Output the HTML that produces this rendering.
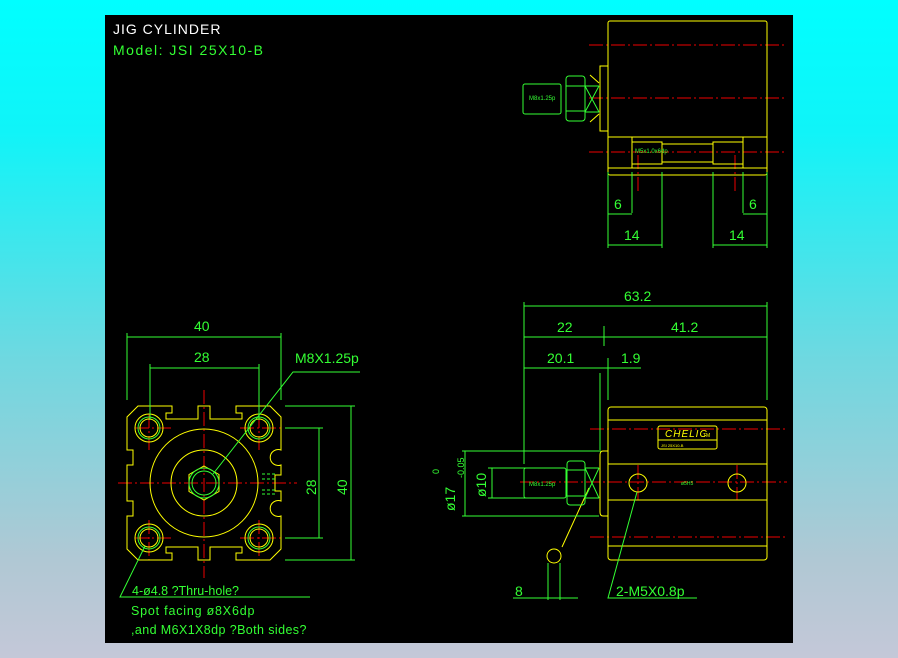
<!DOCTYPE html>
<html><head><meta charset="utf-8"><style>
html,body{margin:0;padding:0;width:898px;height:658px;overflow:hidden;background:linear-gradient(#00ffff 0%,#10f4f8 20%,#70d8e0 55%,#b0c8d4 85%,#c4c8d8 100%);}
svg{position:absolute;left:0;top:0}
text{font-family:"Liberation Sans",sans-serif}
</style></head><body>
<svg width="898" height="658" viewBox="0 0 898 658">
<rect x="105" y="15" width="688" height="628" fill="#000"/>
<g font-size="14" letter-spacing="1">
<text x="113" y="34" fill="#fff">JIG CYLINDER</text>
<text x="113" y="55" fill="#3f3" letter-spacing="1.5">Model:  JSI 25X10-B</text>
</g>
<g stroke="#e00" stroke-width="1" stroke-dasharray="14,3,2,3" fill="none">
<line x1="118" y1="483" x2="297" y2="483"/><line x1="204" y1="390" x2="204" y2="578"/>
<line x1="135" y1="428" x2="173" y2="428"/><line x1="149" y1="414" x2="149" y2="452"/>
<line x1="240" y1="428" x2="282" y2="428"/><line x1="259" y1="414" x2="259" y2="452"/>
<line x1="135" y1="538" x2="173" y2="538"/><line x1="149" y1="520" x2="149" y2="560"/>
<line x1="240" y1="538" x2="282" y2="538"/><line x1="259" y1="520" x2="259" y2="560"/>
<line x1="589" y1="45" x2="787" y2="45"/><line x1="589" y1="98" x2="787" y2="98"/><line x1="589" y1="152" x2="787" y2="152"/>
<line x1="638" y1="155" x2="638" y2="192"/><line x1="735" y1="155" x2="735" y2="192"/>
<line x1="590" y1="429" x2="787" y2="429"/><line x1="520" y1="482" x2="787" y2="482"/><line x1="590" y1="537" x2="787" y2="537"/>
<line x1="638" y1="465" x2="638" y2="500"/><line x1="737" y1="465" x2="737" y2="500"/>
</g>
<g stroke="#ff0" stroke-width="1" fill="none">
<path d="M138,406 H172 V413 H166 V419 H198 V406 H210 V419 H242 V413 H236 V406 H270 L281,417 V450 A8,8 0 1 0 281,465 V475 H275 V491 H281 V501 A8,8 0 1 0 281,516 V549 L270,560 H236 V553 H242 V547 H210 V560 H198 V547 H166 V553 H172 V560 H138 L127,549 V516 H133 V501 H127 V465 H133 V450 H127 V417 Z"/>
<circle cx="204" cy="483" r="54"/><circle cx="204" cy="483" r="33"/>
<polygon points="204,466 219,474.5 219,491.5 204,500 189,491.5 189,474.5"/>
<circle cx="149" cy="428" r="14"/><circle cx="259" cy="428" r="14"/><circle cx="149" cy="538" r="14"/><circle cx="259" cy="538" r="14"/>
<circle cx="149" cy="428" r="9"/><circle cx="259" cy="428" r="9"/><circle cx="149" cy="538" r="9"/><circle cx="259" cy="538" r="9"/>
</g>
<g stroke="#3f3" stroke-width="1" fill="none">
<circle cx="204" cy="483" r="15"/><circle cx="204" cy="483" r="12"/>
<circle cx="149" cy="428" r="11"/><circle cx="259" cy="428" r="11"/><circle cx="149" cy="538" r="11"/><circle cx="259" cy="538" r="11"/>
<path d="M262,474h13M262,479h13M262,490h13M262,494h13" stroke-dasharray="3,2"/>
<path d="M127,400V333M281,400V333M127,337H281M150,420V364M259,420V364M150,368H259"/>
<path d="M213,474L293,372H360"/>
<path d="M285,406H355M285,560H355M351,406V560M285,428H323M285,538H323M319,428V538"/>
<path d="M145,546L120,597H310"/>
</g>
<g fill="#3f3" font-size="14">
<text x="194" y="331">40</text><text x="194" y="362">28</text>
<text x="295" y="363">M8X1.25p</text>
<text x="0" y="0" transform="translate(316,495) rotate(-90)">28</text>
<text x="0" y="0" transform="translate(347,495) rotate(-90)">40</text>
<text x="132" y="595" font-size="12.5">4-ø4.8 ?Thru-hole?</text>
<text x="131" y="615" font-size="12.5" letter-spacing="0.8">Spot facing  ø8X6dp</text>
<text x="131" y="634" font-size="12.5" letter-spacing="0.4">,and M6X1X8dp ?Both sides?</text>
</g>
<g stroke="#ff0" stroke-width="1" fill="none">
<rect x="608" y="21" width="159" height="154" rx="2"/>
<path d="M608,137H767M608,168H767M632,137V168M743,137V168M632,142H662V164H632M743,142H713V164H743M662,144H713M662,162H713"/>
<path d="M608,66H600V131H608"/><path d="M599,83L590,75M599,114L590,122"/>
</g>
<g stroke="#3f3" stroke-width="1" fill="none">
<rect x="523" y="84" width="38" height="30" rx="2"/>
<rect x="566" y="76" width="19" height="45" rx="3"/><path d="M566,86H585M566,111H585M585,86L599,112M585,112L599,86M585,86H599M585,112H599"/>
<path d="M608,172V248M632,172V213M662,172V248M713,172V248M743,172V213M767,172V248M608,214H632M743,214H767M608,245H662M713,245H767"/>
</g>
<g fill="#3f3"><text x="529" y="100" font-size="6">M8x1.25p</text><text x="635" y="153" font-size="6">M5x1.0x6dp</text></g>
<g fill="#3f3" font-size="14"><text x="614" y="209">6</text><text x="749" y="209">6</text><text x="624" y="240">14</text><text x="729" y="240">14</text></g>
<g stroke="#ff0" stroke-width="1" fill="none">
<rect x="608" y="407" width="159" height="153" rx="3"/>
<path d="M608,420H767M608,464H767M608,500H767M608,546H767"/>
<path d="M608,451H603Q600,451 600,455V512Q600,516 603,516H608"/>
<rect x="658" y="426" width="59" height="23" rx="2"/><path d="M658,440H717"/>
<circle cx="638" cy="483" r="9"/><circle cx="737" cy="483" r="9"/>
<path d="M589,488L562,547"/><circle cx="554" cy="556" r="7"/>
</g>
<g fill="#ff0"><text x="665" y="437" font-size="10" font-style="italic" letter-spacing="1">CHELIC</text><text x="703" y="437" font-size="5">TM</text>
<text x="661" y="447" font-size="4">JSI 25X10-B</text></g>
<g stroke="#3f3" stroke-width="1" fill="none">
<rect x="524" y="468" width="42" height="30" rx="2"/>
<rect x="567" y="461" width="18" height="44" rx="3"/><path d="M567,470H585M567,496H585M585,468L599,498M585,498L599,468M585,468H599M585,498H599"/>
<path d="M524,464V302M767,400V302M524,306H767M524,337H767M604,346V326M524,368H641M600,452V373M608,400V358"/>
<path d="M563,468H488M563,498H488M492,468V498M599,451H462M599,516H462M465,451V516"/>
<path d="M637,492L608,598H697"/>
<path d="M548,563V600M560,563V600M513,598H578"/>
</g>
<g fill="#3f3" font-size="14">
<text x="624" y="301">63.2</text><text x="557" y="332">22</text><text x="671" y="332">41.2</text>
<text x="547" y="363">20.1</text><text x="621" y="363">1.9</text>
<text x="515" y="596">8</text><text x="616" y="596">2-M5X0.8p</text>
<text x="0" y="0" transform="translate(486,497) rotate(-90)">ø10</text>
<text x="0" y="0" transform="translate(455,511) rotate(-90)">ø17</text>
<text x="0" y="0" transform="translate(464,478) rotate(-90)" font-size="9">-0.05</text>
<text x="0" y="0" transform="translate(439,474) rotate(-90)" font-size="9">0</text>
<text x="529" y="486" font-size="6">M8x1.25p</text><text x="681" y="485" font-size="5">ø5H5</text>
</g>
</svg>
</body></html>
